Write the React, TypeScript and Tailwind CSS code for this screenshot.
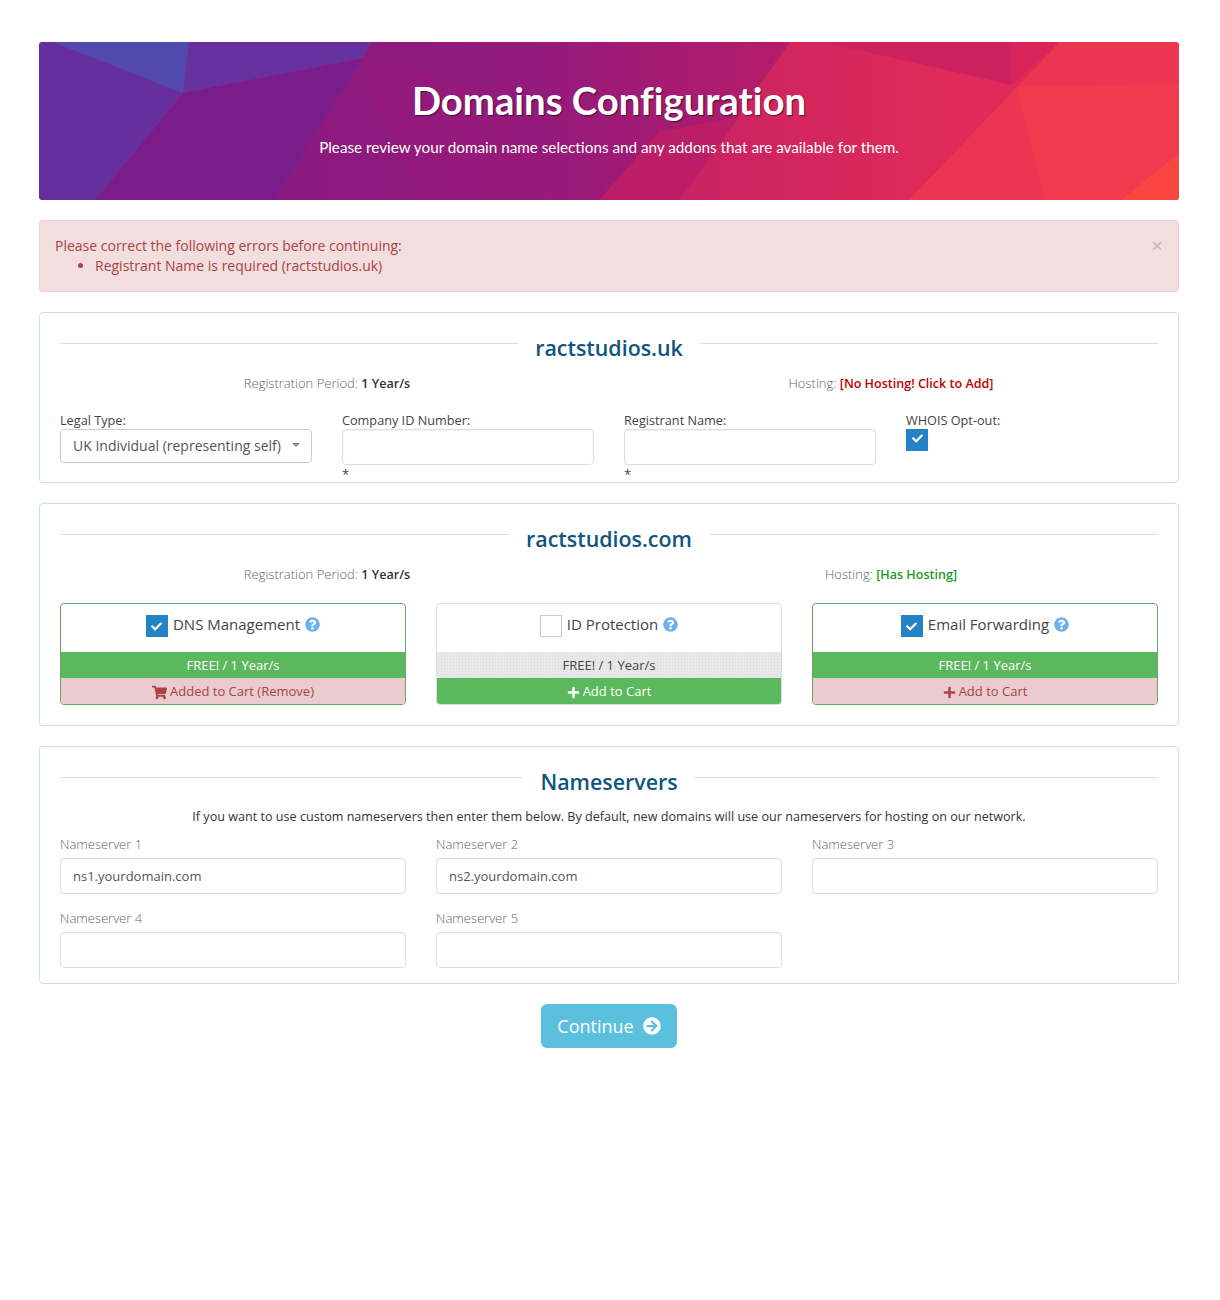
import { FaArrowCircleRight, FaCheck, FaPlus, FaQuestionCircle, FaShoppingCart } from "react-icons/fa";

const font = "font-['Open_Sans',sans-serif]";

function Banner() {
  return (
    <div className="relative h-[158px] overflow-hidden rounded-[4px] bg-[#dc2759] text-center text-white">
      {/* low poly backdrop */}
      <svg className="absolute inset-0" width="1140" height="158" viewBox="0 0 1140 158">
        <defs>
          <linearGradient id="mag" x1="0" x2="1" y1="0" y2="0">
            <stop offset="0" stopColor="#8a1a80" />
            <stop offset="0.5" stopColor="#931a7c" />
            <stop offset="1" stopColor="#b61c69" />
          </linearGradient>
          <linearGradient id="crim" x1="0" x2="1" y1="0" y2="0">
            <stop offset="0.55" stopColor="#c62263" />
            <stop offset="0.8" stopColor="#e02b58" />
          </linearGradient>
        </defs>
        <rect width="1140" height="158" fill="url(#crim)" />
        <polygon points="332,0 751,0 640,158 236,158 324,16" fill="url(#mag)" />
        <polygon points="324,16 450,50 520,158 385,158 328,50" fill="#a01a76" opacity="0.3" />
        <polygon points="560,158 640,158 700,75 620,90" fill="#bb1e66" />
        <polygon points="784,0 971,0 973,43" fill="#cc2260" />
        <polygon points="971,0 1021,0 973,43" fill="#d8265c" />
        <polygon points="1021,0 1140,0 1140,158 870,158" fill="#ec3651" />
        <polygon points="977,45 1140,42 1140,111 1082,158 1006,158" fill="#f23a4e" />
        <polygon points="1140,111 1082,158 1140,158" fill="#fb4540" />
        <polygon points="0,0 14,0 144,51 56,158 0,158" fill="#662f9e" />
        <polygon points="14,0 150,0 144,51" fill="#5249ac" />
        <polygon points="150,0 332,0 324,16 144,51" fill="#6532a0" />
        <polygon points="144,51 324,16 236,158 56,158" fill="#7b1c8b" />
      </svg>
      <div className="relative">
        <h1 className="pt-[35px] font-['Lato',sans-serif] text-[38.3px] leading-[46px] font-bold [font-variant-ligatures:no-common-ligatures] [text-shadow:1px_1px_1px_rgba(0,0,0,0.55)]">
          Domains Configuration
        </h1>
        <p className="mt-[13px] font-['Lato',sans-serif] text-[15.25px] leading-[22px]">
          Please review your domain name selections and any addons that are available for them.
        </p>
      </div>
    </div>
  );
}

function SubHeading({ children }: { children: string }) {
  return (
    <div className="flex items-start">
      <div className="mt-[10px] h-px flex-1 bg-[#dddddd]" />
      <h2 className="px-[17px] text-[21.4px] leading-[30px] font-semibold text-[#0f5580]">{children}</h2>
      <div className="mt-[10px] h-px flex-1 bg-[#dddddd]" />
    </div>
  );
}

function Period({ children }: { children: React.ReactNode }) {
  return (
    <div className="-mx-[15px] mt-[10px] grid h-[20px] grid-cols-2 text-center text-[13px] leading-[20px] font-light text-[#666666]">
      <div>
        Registration Period: <span className="text-[12.6px] font-semibold text-[#333333]">1 Year/s</span>
      </div>
      <div>{children}</div>
    </div>
  );
}

function Check({ on, small }: { on: boolean; small?: boolean }) {
  if (!on) {
    return <span className="inline-block h-[22px] w-[22px] shrink-0 border border-[#cccccc] bg-white" />;
  }
  return (
    <span className={`flex h-[22px] w-[22px] shrink-0 items-center justify-center bg-[#2483c5] text-white ${small ? "pb-[3px]" : ""}`}>
      <FaCheck className="h-[11px] w-[11px]" />
    </span>
  );
}

function TextField({ label }: { label: string }) {
  return (
    <div>
      <div className="text-[12.7px] leading-[18px] text-[#444444]">{label}</div>
      <div className="h-[36px] rounded-[4px] border border-[#dddddd] bg-white shadow-[inset_0_1px_1px_rgba(0,0,0,0.05)]" />
      <div className="h-[14px] text-[13px] leading-[18px] text-[#444444]">*</div>
    </div>
  );
}

function NsField({ label, value }: { label: string; value?: string }) {
  return (
    <div>
      <div className="text-[13px] leading-[18px] font-light text-[#666666]">{label}</div>
      <div className="mt-[5px] flex h-[36px] items-center rounded-[4px] border border-[#dddddd] bg-white px-[12px] pt-[2px] text-[13px] text-[#555555] shadow-[inset_0_1px_1px_rgba(0,0,0,0.05)]">
        {value}
      </div>
    </div>
  );
}

type AddonProps = {
  name: string;
  on: boolean;
  bottom: "added" | "add" | "addOff";
};

function Addon({ name, on, bottom }: AddonProps) {
  return (
    <div className={`overflow-hidden rounded-[4px] border ${on ? "border-[#66a866]" : "border-[#dddddd]"} h-[102px] bg-white`}>
      <div className="flex h-[48px] items-start justify-center gap-[5px] pt-[11px]">
        <Check on={on} />
        <span className="-mt-px text-[15px] leading-[20px] text-[#444444]">{name}</span>
        <FaQuestionCircle className="mt-[2px] h-[15px] w-[15px] text-[#6bb1ec]" />
      </div>
      <div
        className={`h-[26px] text-center text-[13px] leading-[26px] ${
          on
            ? "bg-[#5cb85c] text-white"
            : "bg-[#e8e8e8] bg-[radial-gradient(#dcdcdc_1px,transparent_1px)] bg-[length:3px_3px] text-[#444444]"
        }`}
      >
        FREE! / 1 Year/s
      </div>
      <div
        className={`flex h-[26px] items-center justify-center gap-[3px] pt-[2px] text-[13px] ${
          bottom === "add" ? "bg-[#5cb85c] text-white" : "bg-[#eacbcf] text-[#a94442]"
        }`}
      >
        {bottom === "added" ? <FaShoppingCart className="h-[15px] w-[15px]" /> : <FaPlus className="h-[13px] w-[13px]" />}
        {bottom === "added" ? "Added to Cart (Remove)" : "Add to Cart"}
      </div>
    </div>
  );
}

export default function App() {
  const card = "rounded-[4px] border border-[#c4e3ee] bg-white px-[20px]";
  return (
    <div className={`${font} h-[1300px] bg-white pt-[42px] pl-[39px] text-[14px] text-[#333333]`}>
      <div className="w-[1140px]">
        <Banner />

        {/* Error */}
        <div className="relative mt-[20px] h-[72px] rounded-[4px] border border-[#ebccd1] bg-[#f2dede] p-[15px] text-[14px] leading-[20px] text-[#a94442]">
          <span className="absolute top-[15px] right-[15px] text-[20px] leading-[20px] text-[#c9b2b2]">×</span>
          Please correct the following errors before continuing:
          <ul className="list-disc pl-[40px]">
            <li>Registrant Name is required (ractstudios.uk)</li>
          </ul>
        </div>

        {/* ractstudios.uk */}
        <div className={`${card} mt-[20px] h-[171px] pt-[20px]`}>
          <SubHeading>ractstudios.uk</SubHeading>
          <Period>
            Hosting: <span className="text-[12.55px] font-semibold text-[#c00000]">[No Hosting! Click to Add]</span>
          </Period>
          <div className="mt-[18px] grid grid-cols-4 gap-[30px]">
            <div>
              <div className="text-[12.7px] leading-[18px] text-[#444444]">Legal Type:</div>
              <div className="flex h-[34px] items-center justify-between rounded-[4px] border border-[#cccccc] bg-white pr-[11px] pb-[2px] pl-[12px] text-[14px] text-[#555555]">
                UK Individual (representing self)
                <span className="h-0 w-0 border-x-[4px] border-t-[4px] border-x-transparent border-t-[#888888]" />
              </div>
            </div>
            <TextField label="Company ID Number:" />
            <TextField label="Registrant Name:" />
            <div>
              <div className="text-[12.7px] leading-[18px] text-[#444444]">WHOIS Opt-out:</div>
              <Check on small />
            </div>
          </div>
        </div>

        {/* ractstudios.com */}
        <div className={`${card} mt-[20px] h-[223px] pt-[20px]`}>
          <SubHeading>ractstudios.com</SubHeading>
          <Period>
            Hosting: <span className="text-[12.55px] font-semibold text-[#1e9a1e]">[Has Hosting]</span>
          </Period>
          <div className="mt-[19px] grid grid-cols-3 gap-[30px]">
            <Addon name="DNS Management" on bottom="added" />
            <Addon name="ID Protection" on={false} bottom="add" />
            <Addon name="Email Forwarding" on bottom="addOff" />
          </div>
        </div>

        {/* Nameservers */}
        <div className={`${card} mt-[20px] h-[238px] pt-[20px]`}>
          <SubHeading>Nameservers</SubHeading>
          <p className="mt-[10px] text-center text-[12.6px] leading-[20px] text-[#333333]">
            If you want to use custom nameservers then enter them below. By default, new domains will use our nameservers for hosting on our network.
          </p>
          <div className="mt-[8px] grid grid-cols-3 gap-x-[30px] gap-y-[15px]">
            <NsField label="Nameserver 1" value="ns1.yourdomain.com" />
            <NsField label="Nameserver 2" value="ns2.yourdomain.com" />
            <NsField label="Nameserver 3" />
            <NsField label="Nameserver 4" />
            <NsField label="Nameserver 5" />
          </div>
        </div>

        <div className="mt-[20px] flex justify-center">
          <button className="flex h-[44px] w-[136px] items-center justify-center gap-[9px] rounded-[6px] bg-[#5bc0de] text-[18px] text-white">
            Continue
            <FaArrowCircleRight className="h-[18px] w-[18px]" />
          </button>
        </div>
      </div>
    </div>
  );
}
